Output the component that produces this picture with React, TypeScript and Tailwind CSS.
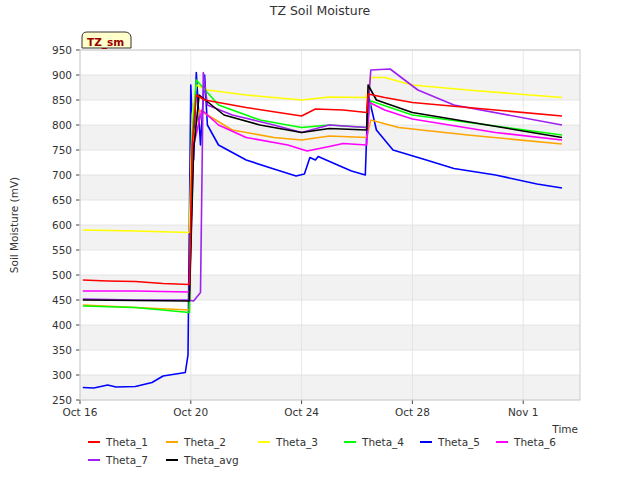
const X = (d: number) => 80 + 27.7 * d;
const Y = (v: number) => 50 + (950 - v) * 0.5;

type S = { name: string; color: string; pts: [number, number][] };

const series: S[] = [
  { name: "Theta_1", color: "#ff0000", pts: [[0.1, 490], [1, 488], [2, 487], [3, 483], [3.95, 481], [4.05, 760], [4.2, 860], [4.5, 850], [6, 835], [8, 818], [8.5, 832], [9.5, 830], [10.35, 825], [10.4, 862], [11, 855], [12, 845], [15, 830], [17.4, 818]] },
  { name: "Theta_3", color: "#ffff00", pts: [[0.1, 590], [2, 588], [3.95, 585], [4.05, 820], [4.2, 880], [4.6, 870], [6, 860], [8, 850], [9, 856], [10.35, 855], [10.5, 895], [11, 895], [12, 880], [14, 870], [17.4, 855]] },
  { name: "Theta_2", color: "#ffa500", pts: [[0.1, 440], [2, 435], [3.95, 430], [4.05, 760], [4.3, 830], [5.5, 790], [7, 775], [8, 770], [9, 778], [10.35, 775], [10.5, 810], [11.5, 795], [14, 780], [17.4, 762]] },
  { name: "Theta_4", color: "#00ff00", pts: [[0.1, 438], [2, 435], [3.95, 425], [4.05, 780], [4.2, 890], [5, 840], [6.5, 810], [8, 795], [9, 800], [10.35, 795], [10.5, 848], [12, 820], [17.4, 780]] },
  { name: "Theta_5", color: "#0000ff", pts: [[0.1, 275], [0.5, 274], [1, 280], [1.3, 276], [2, 277], [2.6, 285], [3, 298], [3.8, 305], [3.9, 340], [4, 880], [4.1, 730], [4.2, 905], [4.35, 760], [4.5, 900], [4.6, 800], [5, 760], [6, 730], [7, 712], [7.8, 698], [8.1, 702], [8.3, 735], [8.5, 730], [8.6, 737], [9.3, 720], [9.8, 708], [10.3, 700], [10.4, 862], [10.7, 790], [11.3, 750], [12.5, 730], [13.5, 713], [15, 700], [16.5, 682], [17.4, 674]] },
  { name: "Theta_6", color: "#ff00ff", pts: [[0.1, 468], [2, 468], [3.95, 466], [4.1, 760], [4.4, 830], [5, 800], [6, 775], [7.5, 760], [8.2, 748], [9, 757], [9.5, 763], [10.35, 760], [10.45, 845], [11, 830], [12, 812], [15, 785], [17.4, 770]] },
  { name: "Theta_7", color: "#a020f0", pts: [[0.1, 452], [2, 450], [3.9, 450], [4.1, 448], [4.35, 465], [4.45, 905], [4.6, 840], [5.5, 820], [7, 800], [8, 785], [9, 800], [10.35, 795], [10.5, 910], [11.2, 912], [11.6, 895], [12.2, 870], [13.5, 840], [17.4, 800]] },
  { name: "Theta_avg", color: "#000000", pts: [[0.1, 450], [2, 449], [3.95, 448], [4.1, 750], [4.3, 860], [5.2, 820], [6.5, 800], [8, 785], [9, 793], [10.35, 790], [10.4, 880], [10.7, 850], [12, 825], [17.4, 775]] },
];

const order = ["Theta_5", "Theta_3", "Theta_2", "Theta_4", "Theta_6", "Theta_7", "Theta_avg", "Theta_1"];
const legend: [string, number, number][] = [
  ["Theta_1", 88, 0], ["Theta_2", 166, 0], ["Theta_3", 258, 0], ["Theta_4", 344, 0], ["Theta_5", 420, 0], ["Theta_6", 496, 0],
  ["Theta_7", 88, 1], ["Theta_avg", 166, 1],
];
const yt = [250, 300, 350, 400, 450, 500, 550, 600, 650, 700, 750, 800, 850, 900, 950];
const xt: [number, string][] = [[0, "Oct 16"], [4, "Oct 20"], [8, "Oct 24"], [12, "Oct 28"], [16, "Nov 1"]];

export default function App() {
  const byName = (n: string) => series.find((s) => s.name === n)!;
  return (
    <div className="w-[640px] h-[480px] bg-white" style={{ fontFamily: "'DejaVu Sans', sans-serif" }}>
      <svg width="640" height="480" className="block">
        <rect x="80" y="50" width="500" height="350" fill="#ffffff" />
        {yt.slice(0, -1).map((v, i) =>
          i % 2 === 0 ? <rect key={v} x="80" y={Y(v + 50)} width="500" height="25" fill="#f2f2f2" /> : null
        )}
        {yt.map((v) => (
          <g key={v}>
            <line x1="80" x2="580" y1={Y(v)} y2={Y(v)} stroke="#e0e0e0" strokeWidth="0.8" />
            <line x1="76" x2="80" y1={Y(v)} y2={Y(v)} stroke="#444" />
            <text x="72" y={Y(v) + 4} fontSize="10.5" textAnchor="end" fill="#333">{v}</text>
          </g>
        ))}
        {xt.map(([d, l]) => (
          <g key={l}>
            <line x1={X(d)} x2={X(d)} y1="50" y2="400" stroke="#e0e0e0" strokeWidth="0.8" />
            <line x1={X(d)} x2={X(d)} y1="400" y2="404" stroke="#444" />
            <text x={X(d)} y="416" fontSize="10.5" textAnchor="middle" fill="#333">{l}</text>
          </g>
        ))}
        <rect x="80" y="50" width="500" height="350" fill="none" stroke="#cccccc" />
        {order.map((n) => {
          const s = byName(n);
          return (
            <polyline key={n} fill="none" stroke={s.color} strokeWidth="1.6" strokeLinejoin="round"
              points={s.pts.map(([d, v]) => `${X(d).toFixed(1)},${Y(v).toFixed(1)}`).join(" ")} />
          );
        })}
        <text x="320" y="15" fontSize="12.5" textAnchor="middle" fill="#333">TZ Soil Moisture</text>
        <text x="18" y="225" fontSize="10.5" textAnchor="middle" fill="#333" transform="rotate(-90 18 225)">Soil Moisture (mV)</text>
        <text x="578" y="433" fontSize="10.5" textAnchor="end" fill="#333">Time</text>
        <path d="M82 48 V37 Q82 32 87 32 H125 Q130 32 131 37 V48 Z" fill="#ffffcc" stroke="#333" />
        <text x="87" y="46" fontSize="10.5" fontWeight="bold" fill="#990000">TZ_sm</text>
        {legend.map(([n, x, r]) => {
          const y = 442 + r * 18;
          return (
            <g key={n}>
              <line x1={x} x2={x + 12} y1={y} y2={y} stroke={byName(n).color} strokeWidth="2" />
              <text x={x + 18} y={y + 4} fontSize="10.5" fill="#333">{n}</text>
            </g>
          );
        })}
      </svg>
    </div>
  );
}
